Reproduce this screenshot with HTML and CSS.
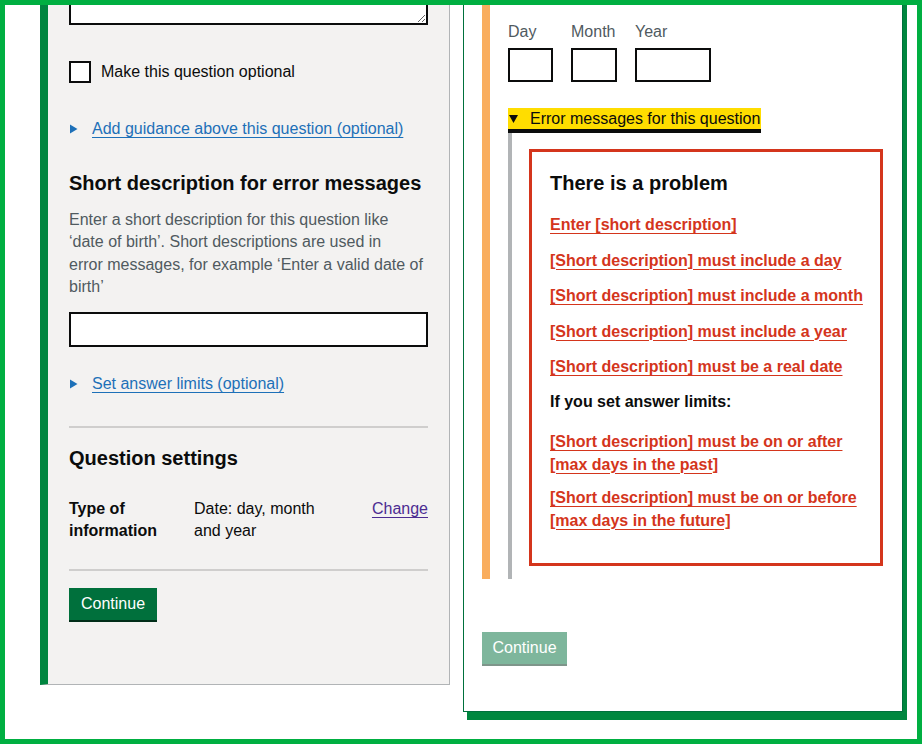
FILE: index.html
```html
<!DOCTYPE html>
<html lang="en">
<head>
<meta charset="utf-8">
<title>Edit date question</title>
<link rel="stylesheet" href="styles.css">
</head>
<body>
<div class="frame">
  <section class="panel-edit">
    <textarea class="textarea" aria-label="Hint text"></textarea>

    <label class="checkbox">
      <input type="checkbox" class="checkbox__input">
      <span class="checkbox__label">Make this question optional</span>
    </label>

    <div class="disclosure disclosure--guidance">
      <svg class="disclosure__arrow" width="8" height="10" viewBox="0 0 8 10" aria-hidden="true"><path d="M0 0.5L7.5 5L0 9.5Z" fill="#1d70b8"/></svg>
      <a href="#" class="link">Add guidance above this question (optional)</a>
    </div>

    <h2 class="heading heading--desc">Short description for error messages</h2>
    <p class="hint">Enter a short description for this question like<br>‘date of birth’. Short descriptions are used in<br>error messages, for example ‘Enter a valid date of<br>birth’</p>
    <input class="input input--full" type="text" aria-label="Short description">

    <div class="disclosure disclosure--limits">
      <svg class="disclosure__arrow" width="8" height="10" viewBox="0 0 8 10" aria-hidden="true"><path d="M0 0.5L7.5 5L0 9.5Z" fill="#1d70b8"/></svg>
      <a href="#" class="link">Set answer limits (optional)</a>
    </div>

    <hr class="rule rule--first">

    <h2 class="heading heading--settings">Question settings</h2>
    <dl class="summary">
      <dt class="summary__key">Type of information</dt>
      <dd class="summary__value">Date: day, month and year</dd>
      <dd class="summary__action"><a href="#" class="link link--visited">Change</a></dd>
    </dl>

    <hr class="rule rule--second">

    <button class="button button--edit" type="button">Continue</button>
  </section>

  <section class="panel-preview">
    <div class="preview">
      <div class="date">
        <div class="date__item">
          <label class="date__label">Day</label>
          <input class="input input--day" type="text" aria-label="Day">
        </div>
        <div class="date__item">
          <label class="date__label">Month</label>
          <input class="input input--month" type="text" aria-label="Month">
        </div>
        <div class="date__item">
          <label class="date__label">Year</label>
          <input class="input input--year" type="text" aria-label="Year">
        </div>
      </div>

      <details class="details" open>
        <summary class="details__summary">
          <svg class="details__arrow" width="9" height="8" viewBox="0 0 9 8" aria-hidden="true"><path d="M0 0H9L4.5 8Z" fill="#0b0c0c"/></svg>
          <span>Error messages for this question</span>
        </summary>
        <div class="details__text">
          <div class="error-summary">
            <h2 class="error-summary__title">There is a problem</h2>
            <ul class="error-list">
              <li><a href="#" class="error-link">Enter [short description]</a></li>
              <li><a href="#" class="error-link">[Short description] must include a day</a></li>
              <li><a href="#" class="error-link">[Short description] must include a month</a></li>
              <li><a href="#" class="error-link">[Short description] must include a year</a></li>
              <li><a href="#" class="error-link">[Short description] must be a real date</a></li>
            </ul>
            <p class="error-summary__sub">If you set answer limits:</p>
            <ul class="error-list error-list--limits">
              <li><a href="#" class="error-link">[Short description] must be on or after [max days in the past]</a></li>
              <li><a href="#" class="error-link">[Short description] must be on or before [max days in the future]</a></li>
            </ul>
          </div>
        </div>
      </details>
    </div>

    <button class="button button--preview" type="button" disabled>Continue</button>
  </section>
</div>
</body>
</html>
```

FILE: styles.css
```css
* {
  box-sizing: border-box;
}

html,
body {
  margin: 0;
  padding: 0;
}

body {
  width: 922px;
  height: 744px;
  overflow: hidden;
  background: #ffffff;
  font-family: "Liberation Sans", Arial, sans-serif;
  color: #0b0c0c;
  font-size: 16px;
}

.frame {
  width: 922px;
  height: 744px;
  border: 5px solid #00af41;
  overflow: hidden;
  display: flex;
  align-items: flex-start;
  padding-left: 35px;
}

/* ---------- Left: edit panel ---------- */

.panel-edit {
  width: 410px;
  flex: none;
  margin-top: -40px;
  background: #f3f2f1;
  border-left: 8px solid #00853f;
  border-right: 1px solid #b1b4b6;
  border-bottom: 1px solid #b1b4b6;
  padding: 0 21px 64px 21px;
  display: flex;
  flex-direction: column;
  align-items: flex-start;
}

.textarea {
  display: block;
  width: 100%;
  height: 60px;
  margin: 0;
  border: 2px solid #0b0c0c;
  background: #ffffff;
  resize: vertical;
  font: inherit;
}

.checkbox {
  display: flex;
  align-items: center;
  gap: 10px;
  margin-top: 36px;
}

.checkbox__input {
  appearance: none;
  -webkit-appearance: none;
  width: 22px;
  height: 22px;
  margin: 0;
  border: 2px solid #0b0c0c;
  background: #ffffff;
}

.checkbox__label {
  font-size: 16px;
  line-height: 22px;
}

.disclosure {
  display: flex;
  align-items: center;
  gap: 14px;
  padding-left: 1px;
  font-size: 16px;
  line-height: 22px;
}

.disclosure--guidance {
  margin-top: 35px;
}

.disclosure--limits {
  margin-top: 26px;
}

.disclosure__arrow {
  display: block;
  flex: none;
}

.link {
  color: #1d70b8;
  text-decoration: underline;
  text-decoration-thickness: 1px;
  text-underline-offset: 3px;
}

.link--visited {
  color: #4c2c92;
}

.heading {
  margin: 0;
  font-size: 20px;
  line-height: 24px;
  font-weight: 700;
}

.heading--desc {
  margin-top: 31px;
}

.heading--settings {
  margin-top: 18px;
}

.hint {
  margin: 14px 0 0 0;
  color: #505a5f;
  font-size: 16px;
  line-height: 22.4px;
}

.input {
  display: block;
  margin: 0;
  height: 34px;
  border: 2px solid #0b0c0c;
  background: #ffffff;
  font: inherit;
  padding: 4px;
}

.input--full {
  width: 100%;
  height: 35px;
  margin-top: 13.4px;
}

.rule {
  width: 100%;
  height: 2px;
  margin: 0;
  border: 0;
  background: #cfcecd;
}

.rule--first {
  margin-top: 31px;
}

.rule--second {
  margin-top: 27px;
}

.summary {
  width: 100%;
  margin: 28px 0 0 0;
  display: grid;
  grid-template-columns: 125px 140px 1fr;
  font-size: 16px;
  line-height: 22px;
}

.summary__key {
  font-weight: 700;
  padding-right: 10px;
}

.summary__value {
  margin: 0;
}

.summary__action {
  margin: 0;
  text-align: right;
}

.button {
  height: 32px;
  padding: 0 12px;
  border: 0;
  border-radius: 0;
  background: #00703c;
  color: #ffffff;
  font-family: "Liberation Sans", Arial, sans-serif;
  font-size: 16px;
  line-height: 32px;
  box-shadow: 0 2px 0 #002d18;
  cursor: pointer;
}

.button--edit {
  margin-top: 17px;
}

/* ---------- Right: preview panel ---------- */

.panel-preview {
  width: 440px;
  flex: none;
  margin-left: 13px;
  margin-top: -20px;
  background: #ffffff;
  border: 1px solid #00703c;
  box-shadow: 4px 8px 0 #00873f;
  padding: 0 0 47px 18px;
}

.preview {
  border-left: 8px solid #f9ad5e;
  padding: 35px 0 0 18px;
}

.date {
  display: flex;
  gap: 18px;
}

.date__label {
  display: block;
  color: #505a5f;
  font-size: 16px;
  line-height: 22px;
}

.date__item .input {
  margin-top: 5px;
}

.input--day {
  width: 45px;
}

.input--month {
  width: 46px;
}

.input--year {
  width: 76px;
}

.details {
  margin-top: 26px;
}

.details__summary {
  display: inline-flex;
  align-items: center;
  gap: 12px;
  height: 25px;
  padding: 0 1px 0 1px;
  background: #ffdd00;
  border-bottom: 4px solid #0b0c0c;
  font-size: 16px;
  line-height: 21px;
  list-style: none;
  cursor: pointer;
}

.details__summary::-webkit-details-marker {
  display: none;
}

.details__arrow {
  display: block;
  flex: none;
}

.details__text {
  border-left: 4px solid #b1b4b6;
  padding: 16px 0 13px 17px;
}

.error-summary {
  width: 354px;
  border: 3px solid #d4351c;
  padding: 19px 15px 31px 18px;
}

.error-summary__title {
  margin: 0;
  font-size: 20px;
  line-height: 24px;
  font-weight: 700;
}

.error-list {
  list-style: none;
  margin: 19px 0 0 0;
  padding: 0;
  font-size: 16px;
  line-height: 22px;
  font-weight: 700;
}

.error-list li + li {
  margin-top: 13.5px;
}

.error-list--limits {
  margin-top: 18px;
  line-height: 22.5px;
}

.error-list--limits li + li {
  margin-top: 11px;
}

.error-link {
  color: #d4351c;
  text-decoration: underline;
  text-decoration-thickness: 1px;
  text-underline-offset: 3px;
}

.error-summary__sub {
  margin: 13px 0 0 0;
  font-size: 16px;
  line-height: 22px;
  font-weight: 700;
}

.button--preview {
  margin-top: 53px;
  padding: 0 10.5px;
  opacity: 0.5;
  cursor: default;
}
```
